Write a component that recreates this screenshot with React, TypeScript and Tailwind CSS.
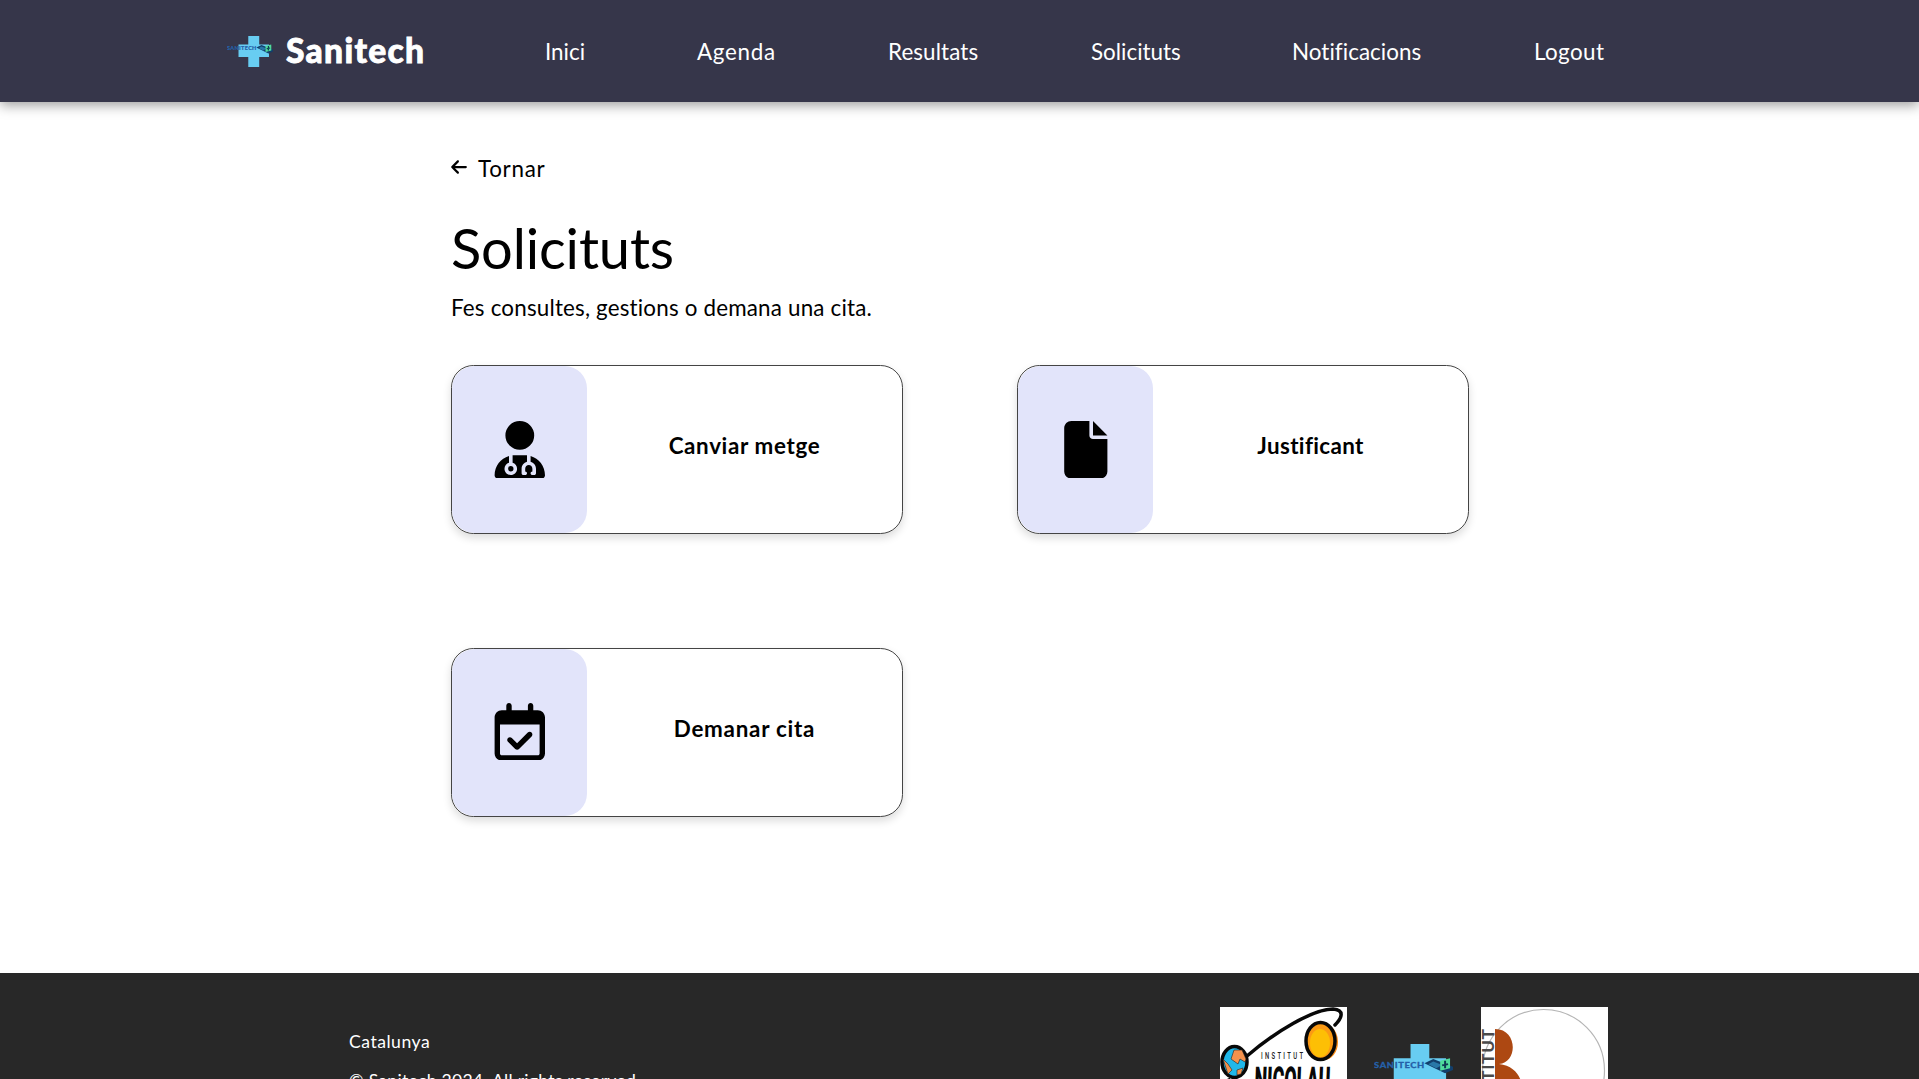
import { FaArrowLeft, FaFile, FaRegCalendarCheck, FaUserDoctor } from "react-icons/fa6";

function SanitechLogo({ className }: { className: string }) {
  return (
    <svg className={className} viewBox="0 0 80 62" preserveAspectRatio="none">
      <path d="M37 0H56V17H73V42H56V62H37V42H20V17H37Z" fill="#68cdf2" />
      <text x="0" y="29" fontSize="9.5" fontWeight="900" fontFamily="Lato, sans-serif" textLength="51" fill="#2560a8" stroke="#2560a8" strokeWidth=".3">
        SANITECH
      </text>
      <path d="M51 23L60 18L80 27L80 31L72 35Z" fill="#123f6b" />
      <path d="M55 24L60 21L69 25L63 29Z" fill="#2878a8" />
      <path d="M67 20L77 17V29L67 32Z" fill="#4fdc9c" />
      <path d="M72 20V29M69 25.5L75 24" stroke="#103b55" strokeWidth="2" />
    </svg>
  );
}

function NicolauLogo() {
  return (
    <svg className="h-[127px] w-[127px] bg-white" viewBox="0 0 127 127">
      <path d="M27 49C55 25 93 2 113 2C125 3 122 11 115 18" fill="none" stroke="#080808" strokeWidth="3.500" strokeLinecap="round" />
      <ellipse cx="104" cy="35" rx="14" ry="18" fill="#f98b16" />
      <ellipse cx="100.500" cy="34" rx="14.500" ry="18.500" fill="#fb9a14" stroke="#080808" strokeWidth="3.500" />
      <ellipse cx="100" cy="36" rx="10" ry="14" fill="#fdbf05" />
      <ellipse cx="14.500" cy="55" rx="12.500" ry="15.500" fill="#20b8ea" stroke="#080808" strokeWidth="3.500" />
      <path d="M14 43L22 43L26 52L25 55L20 52L18 57L11 52ZM3 52L8 57L12 63L8 67ZM17 63L23 61L21 67L17 68Z" fill="#f4914c" stroke="#222" strokeWidth=".6" />
      <text transform="translate(41 52) scale(.6 1)" fontSize="9.800" fontWeight="500" fontFamily="Roboto, sans-serif" textLength="70" fill="#222">INSTITUT</text>
      <text transform="translate(34 86) scale(.55 1) skewX(-4)" fontSize="37" fontWeight="900" fontFamily="Roboto, sans-serif" textLength="138" lengthAdjust="spacingAndGlyphs" fill="#080808">NICOLAU</text>
      <path d="M5 73L11 70L7 78Z" fill="#111" />
    </svg>
  );
}

function InstitutLogo() {
  return (
    <svg className="h-[127px] w-[127px] bg-white" viewBox="0 0 127 127">
      <circle cx="62.500" cy="63.500" r="61" fill="none" stroke="#b5b5b5" strokeWidth="1.200" />
      <path d="M14 22C37 22 37 56 18 57C34 59 41 70 41 82C41 99 31 105 14 105Z" fill="#ad4812" />
      <text transform="translate(13 105) rotate(-90)" fontSize="17" fontWeight="700" fontFamily="Liberation Sans, sans-serif" textLength="83" fill="#4a4a4a">INSTITUT</text>
    </svg>
  );
}

const navItems = [
  { label: "Inici", style: "w-[40px]" },
  { label: "Agenda", style: "w-[79px] tracking-[0.7px]" },
  { label: "Resultats", style: "w-[91px] tracking-[0.1px]" },
  { label: "Solicituts", style: "w-[89px]" },
  { label: "Notificacions", style: "w-[130px] tracking-[0.05px]" },
  { label: "Logout", style: "w-[71px] tracking-[0.4px]" },
];

const cards = [
  { label: "Canviar metge", Icon: FaUserDoctor, tracking: "tracking-[0.65px]", iconStyle: "" },
  { label: "Justificant", Icon: FaFile, tracking: "tracking-[0.35px]", iconStyle: "" },
  { label: "Demanar cita", Icon: FaRegCalendarCheck, tracking: "tracking-[0.75px]", iconStyle: "-mt-0.5" },
];

export default function App() {
  return (
    <div className="flex h-[1079px] flex-col overflow-hidden bg-white font-[Lato,sans-serif] text-[22.4px] text-black">
      <header className="relative flex h-[102px] shrink-0 items-center bg-[#36364a] pl-[227px] text-white shadow-[0_3px_12px_rgba(0,0,0,0.4)]">
        <SanitechLogo className="h-[31px] w-[46px]" />
        <span className="ml-[13px] w-[259px] text-[33.6px] leading-none font-black tracking-[1.3px] [-webkit-text-stroke:0.8px_white]">Sanitech</span>
        <nav className="flex gap-[112px] pt-px">
          {navItems.map(({ label, style }) => (
            <a key={label} className={`${style} whitespace-nowrap`}>{label}</a>
          ))}
        </nav>
      </header>
      <main className="h-[871px] shrink-0 pt-[51px] pl-[451px]">
        <a className="flex h-8 items-center">
          <FaArrowLeft className="-mt-1 -ml-px size-[18px]" />
          <span className="ml-[10px] tracking-[0.7px]">Tornar</span>
        </a>
        <h1 className="mt-[28px] h-[70px] text-[56px] leading-[70px] tracking-[-0.15px]">Solicituts</h1>
        <p className="mt-[9px] h-8 leading-8 tracking-[0.18px]">Fes consultes, gestions o demana una cita.</p>
        <section className="mt-[41px] grid w-[1018px] grid-cols-2 gap-[114px]">
          {cards.map(({ label, Icon, tracking, iconStyle }) => (
            <article key={label} className="flex h-[169px] overflow-hidden rounded-[22.4px] border border-[#444] shadow-[0_4px_8px_rgba(0,0,0,0.14)]">
              <div className="flex w-[135px] items-center justify-center rounded-[22.4px] bg-[#e2e4fa]">
                <Icon className={`h-[57.6px] w-auto ${iconStyle}`} />
              </div>
              <h2 className={`flex flex-1 items-center justify-center pb-2 font-bold ${tracking}`}>{label}</h2>
            </article>
          ))}
        </section>
      </main>
      <footer className="flex h-[240px] shrink-0 justify-between bg-[#282828] pr-[311px] pl-[349px] text-[17.6px] text-white">
        <div className="pt-[55px] leading-7">
          <p className="tracking-[0.5px]">Catalunya</p>
          <p className="mt-[11px] tracking-[0.26px]">© Sanitech 2024. All rights reserved.</p>
        </div>
        <div className="flex pt-[34px]">
          <NicolauLogo />
          <SanitechLogo className="mt-[37px] mr-[28px] ml-[27px] h-[52px] w-[79px]" />
          <InstitutLogo />
        </div>
      </footer>
    </div>
  );
}
